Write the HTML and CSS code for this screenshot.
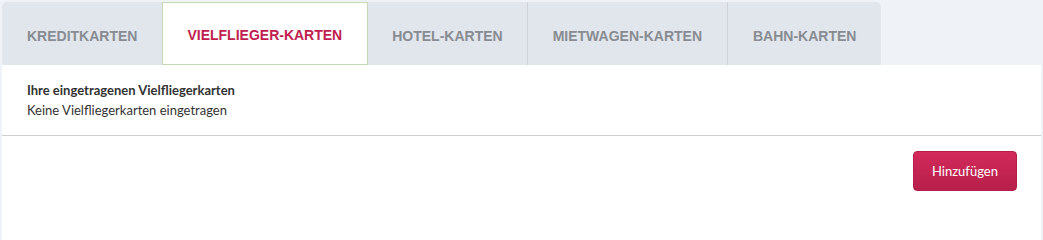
FILE: index.html
```html
<!DOCTYPE html>
<html lang="de">
<head>
<meta charset="utf-8">
<title>Karten</title>
<link rel="stylesheet" href="styles.css">
</head>
<body>
<div class="page">
  <nav class="tabs">
    <a class="tab first">Kreditkarten</a>
    <a class="tab active">Vielflieger-Karten</a>
    <a class="tab">Hotel-Karten</a>
    <a class="tab sep">Mietwagen-Karten</a>
    <a class="tab sep">Bahn-Karten</a>
  </nav>
  <section class="panel">
    <div class="info">
      <div class="title">Ihre eingetragenen Vielfliegerkarten</div>
      <div class="text">Keine Vielfliegerkarten eingetragen</div>
    </div>
    <div class="actions">
      <button class="btn">Hinzufügen</button>
    </div>
  </section>
</div>
</body>
</html>
```

FILE: styles.css
```css
html, body {
  margin: 0;
  padding: 0;
  background: #eff2f6;
}
.page {
  padding: 2px 2px 0 2px;
  display: flex;
  flex-direction: column;
}
.tabs {
  display: flex;
  align-self: flex-start;
  background: #e1e5ec;
  border-radius: 5px 5px 0 0;
  height: 63px;
}
.tab {
  display: flex;
  align-items: center;
  padding: 4px 24px 0;
  font-family: "Liberation Sans", Arial, sans-serif;
  font-weight: bold;
  font-size: 14px;
  text-transform: uppercase;
  color: #888c92;
  box-sizing: border-box;
}
.tab.first {
  padding: 4px 25px 0;
}
.tab.sep {
  border-left: 1px solid #cfd2d6;
  padding: 4px 25px 0;
}
.tab.active {
  background: #fff;
  color: #c0204e;
  border: 1px solid #c5dab3;
  padding: 3px 25px 0 24px;
}
.panel {
  background: #fff;
}
.info {
  padding: 15px 25px 15px;
  border-bottom: 1px solid #cfcfcf;
  font-family: "Source Sans Pro", Lato, "Noto Sans", sans-serif;
  font-size: 13px;
  line-height: 20px;
  color: #333;
}
.title {
  font-weight: bold;
}
.actions {
  display: flex;
  justify-content: flex-end;
  padding: 15px 24px 60px;
}
.btn {
  width: 104px;
  height: 40px;
  border: 1px solid #b31e49;
  border-radius: 4px;
  background: linear-gradient(#d22a5b, #b71f4b);
  color: #fff;
  font-family: "Source Sans Pro", Lato, "Noto Sans", sans-serif;
  font-size: 13px;
  padding: 0;
}
```
